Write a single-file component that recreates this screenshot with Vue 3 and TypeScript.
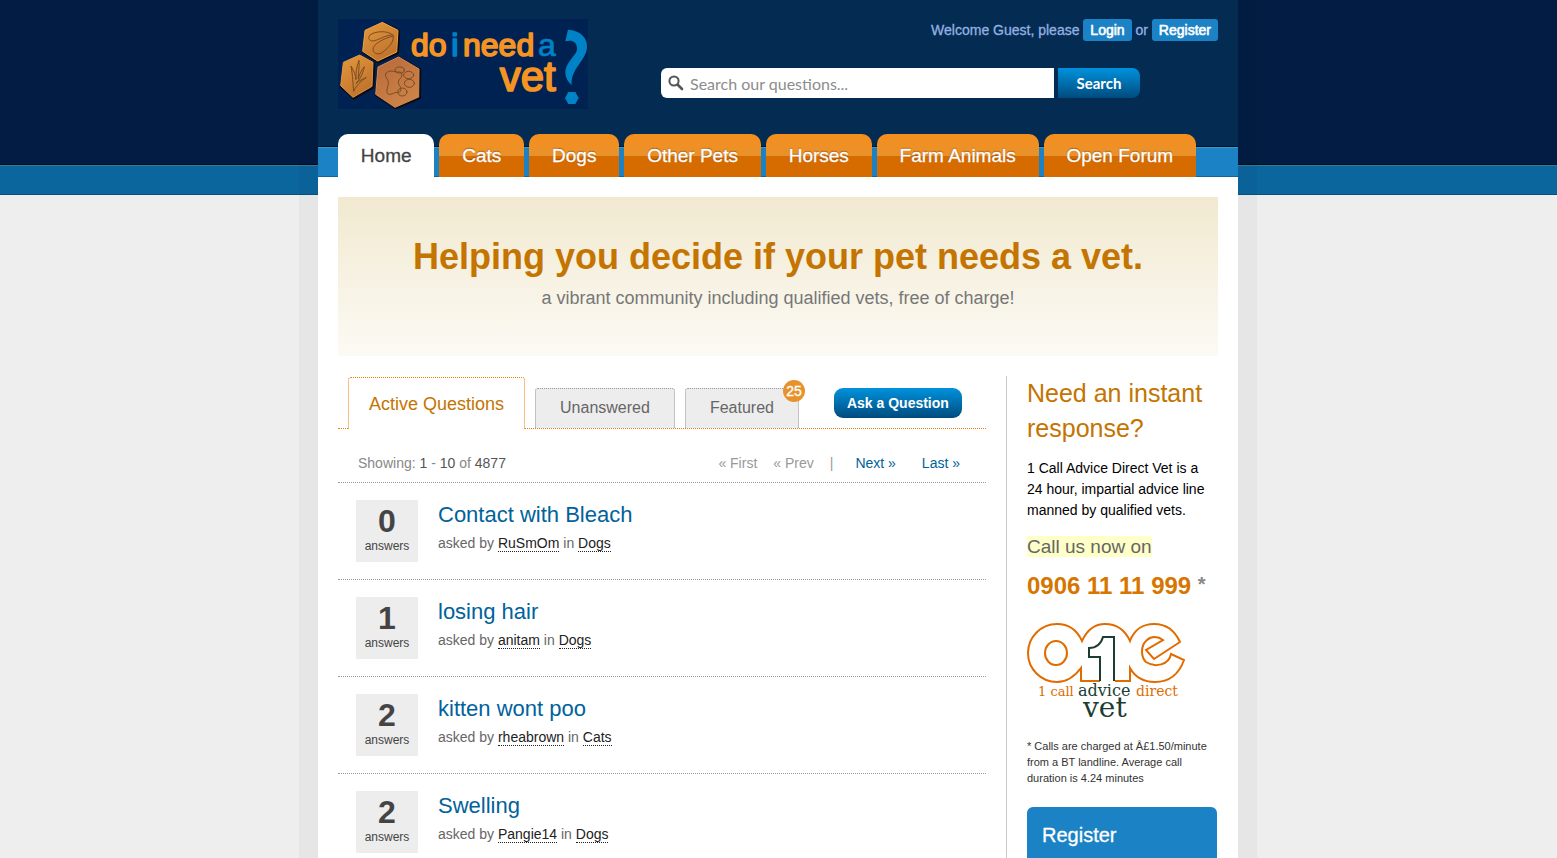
<script setup lang="ts">
interface Question {
  answers: number
  title: string
  user: string
  category: string
}

const sections: string[] = ['Home', 'Cats', 'Dogs', 'Other Pets', 'Horses', 'Farm Animals', 'Open Forum']

const questions: Question[] = [
  { answers: 0, title: 'Contact with Bleach', user: 'RuSmOm', category: 'Dogs' },
  { answers: 1, title: 'losing hair', user: 'anitam', category: 'Dogs' },
  { answers: 2, title: 'kitten wont poo', user: 'rheabrown', category: 'Cats' },
  { answers: 2, title: 'Swelling', user: 'Pangie14', category: 'Dogs' },
]
</script>

<template>
  <div class="page">
    <div class="wrap">
      <header class="header">
        <a class="logo" href="#" aria-label="Do I need a vet?">
          <svg width="250" height="90" viewBox="54 57 750 270" aria-hidden="true">
            <defs>
              <linearGradient id="amber" x1="0" y1="0" x2="0.6" y2="1">
                <stop offset="0" stop-color="#e59a3c" />
                <stop offset="1" stop-color="#c0722c" />
              </linearGradient>
              <linearGradient id="copper" x1="0" y1="0" x2="0.6" y2="1">
                <stop offset="0" stop-color="#b8693a" />
                <stop offset="1" stop-color="#cc8348" />
              </linearGradient>
            </defs>
            <rect x="54" y="57" width="750" height="270" fill="#002253" />
            <g fill="#0c0b12" stroke="#0c0b12" stroke-width="4" stroke-linejoin="round">
              <path d="M190 68 239 92 235 160 175 188 129 158 136 92Z" />
              <path d="M122 166 164 189 161 263 101 297 62 261 70 189Z" />
              <path d="M239 172 302 209 301 295 227 326 167 286 175 203Z" />
            </g>
            <g stroke-width="3" stroke-linejoin="round">
              <path d="M187 67 234 91 230 156 173 183 128 154 135 91Z" fill="url(#amber)" stroke="#e8a450" />
              <path d="M119 165 159 187 156 259 99 292 62 257 70 187Z" fill="url(#amber)" stroke="#dd964a" />
              <path d="M236 171 297 207 296 291 225 322 167 283 174 201Z" fill="url(#copper)" stroke="#d48a55" />
            </g>
            <g fill="none" stroke="#7a4c26" stroke-width="3" stroke-linecap="round" stroke-linejoin="round">
              <path d="M217 104C202 90 163 94 150 105C141 114 149 126 164 122C181 117 192 108 217 104Z" />
              <path d="M220 108C192 115 158 132 159 149C160 163 179 165 188 157C202 145 222 130 220 108Z" />
              <path d="M101 273C98 248 99 231 93 198C103 216 107 225 108 239C107 219 109 204 117 181C119 202 114 221 115 237C118 224 122 214 133 200C128 224 119 239 108 250C119 241 128 238 139 232C122 246 112 252 101 273Z" />
              <path d="M198 220C208 206 224 217 234 216C248 214 248 228 241 235C234 242 233 250 240 259C246 271 241 280 229 277C217 280 207 288 202 279C197 269 207 256 205 244C202 235 192 229 198 220Z" />
              <ellipse cx="239" cy="210" rx="14" ry="9" />
              <ellipse cx="266" cy="225" rx="15" ry="11" />
              <ellipse cx="268" cy="250" rx="15" ry="12" />
              <ellipse cx="247" cy="276" rx="14" ry="12" />
            </g>
            <g class="logo-text" stroke-width="5" stroke-linejoin="round">
              <g fill="#f59423" stroke="#f59423" font-size="96">
                <text x="273" y="168">do</text>
                <text x="429" y="168">need</text>
                <text x="539" y="273" font-size="126">vet</text>
              </g>
              <g fill="#0083c6" stroke="#0083c6" font-size="96" stroke-width="2">
                <text x="394" y="168" stroke-width="5">i</text>
                <text x="654" y="168">a</text>
              </g>
            </g>
            <g fill="#0083c6">
              <path d="M744 89C780 91 803 112 801 143C798 181 751 207 755 255C735 237 730 214 744 191C757 170 773 158 771 144C770 125 756 119 736 124Z" />
              <path d="M745 276H766L776 294L766 312H745L735 294Z" />
            </g>
          </svg>
        </a>
        <div class="header-tools">
          <p class="welcome">
            Welcome Guest, please <a class="chip" href="#">Login</a> or <a class="chip" href="#">Register</a>
          </p>
          <form class="search" role="search" @submit.prevent>
            <label class="search-box">
              <svg width="16" height="16" viewBox="0 0 16 16" role="img" aria-label="Search our questions">
                <circle cx="6" cy="6" r="4.6" fill="none" stroke="#555" stroke-width="2" />
                <path d="M9.5 9.5 14 14" stroke="#555" stroke-width="2.6" stroke-linecap="round" />
              </svg>
              <input type="text" placeholder="Search our questions..." />
            </label>
            <button type="submit">Search</button>
          </form>
        </div>
      </header>

      <nav class="sections">
        <a v-for="(name, i) in sections" :key="name" href="#" :class="{ current: i === 0 }">{{ name }}</a>
      </nav>

      <section class="hero">
        <h1>Helping you decide if your pet needs a vet.</h1>
        <p>a vibrant community including qualified vets, free of charge!</p>
      </section>

      <div class="columns">
        <main class="content">
          <div class="tabs">
            <a class="tab active" href="#">Active Questions</a>
            <a class="tab" href="#">Unanswered</a>
            <a class="tab" href="#">Featured<span class="badge">25</span></a>
            <button class="ask" type="button">Ask a Question</button>
          </div>
          <div class="pager">
            <p>Showing: <b>1</b> - <b>10</b> of <b>4877</b></p>
            <div class="pages">
              <span>« First</span>
              <span>« Prev</span>
              <span>|</span>
              <a class="next" href="#">Next »</a>
              <a class="last" href="#">Last »</a>
            </div>
          </div>
          <article v-for="q in questions" :key="q.title" class="question">
            <div class="count"><strong>{{ q.answers }}</strong><span>answers</span></div>
            <div>
              <h2><a href="#">{{ q.title }}</a></h2>
              <p>asked by <a href="#">{{ q.user }}</a> in <a href="#">{{ q.category }}</a></p>
            </div>
          </article>
        </main>

        <aside class="sidebar">
          <h2>Need an instant response?</h2>
          <p class="pitch">1 Call Advice Direct Vet is a 24 hour, impartial advice line manned by qualified vets.</p>
          <p class="call"><mark>Call us now on</mark></p>
          <p class="phone">0906 11 11 999 <span>*</span></p>
          <svg class="partner" width="160" height="104" viewBox="0 0 160 104" role="img" aria-label="1 call advice direct vet">
            <g fill="none" stroke="#e06c00" stroke-width="2" stroke-linejoin="miter">
              <path d="M73 59H54V46C48 54 40 60 30 60C14 60 1 47 1 31C1 15 14 2 30 2C41 2 50 8 55 19C60 8 68 2 78 2C89 2 98 8 103 19C107 8 116 2 127 2C139 2 148 9 153 20L127 37L119 28L136 18C131 14 124 14 120 18C113 24 114 35 119 40C128 46 142 43 144 32L157 38C152 52 142 60 128 60C117 60 108 55 103 46V59H88" />
              <ellipse cx="29" cy="31" rx="11" ry="12" />
            </g>
            <path d="M73 59V35H62V26C70 26 74 22 76 15H87V59" fill="#fff" stroke="#1c3d33" stroke-width="2" />
            <g class="partner-text">
              <text x="11" y="74" font-size="13" fill="#e06c00">1 call</text>
              <text x="51" y="74" font-size="16" fill="#1c3d33">advice</text>
              <text x="109" y="74" font-size="14" fill="#e06c00">direct</text>
              <text x="56" y="95" font-size="28" fill="#1c3d33">vet</text>
            </g>
          </svg>
          <p class="terms">* Calls are charged at Â£1.50/minute from a BT landline. Average call duration is 4.24 minutes</p>
          <section class="register">
            <h2>Register</h2>
          </section>
        </aside>
      </div>
    </div>
  </div>
</template>

<style>
body {
  margin: 0;
  background: #ededed;
}
</style>

<style scoped>
.page {
  min-height: 100vh;
  padding-right: 1px;
  background: linear-gradient(#031c44 164px, #0a0d14 164px 165px, #2b7ca6 165px 166px, #0b669d 166px 194px, #075180 194px 195px, #eee 195px);
  font-family: "Liberation Sans", Arial, sans-serif;
  font-size: 14px;
  line-height: 21px;
  color: #666;
}

h1,
h2,
p {
  margin: 0;
  font-weight: normal;
}

a {
  color: #00629b;
  text-decoration: none;
}

.wrap {
  max-width: 920px;
  min-height: 100vh;
  margin: 0 auto;
  background: #fff;
  box-shadow: -19px 0 rgba(0, 0, 0, 0.03), 19px 0 rgba(0, 0, 0, 0.03);
}

.header {
  display: flex;
  justify-content: space-between;
  height: 115px;
  padding: 19px 20px 0;
  background: #042b52;
}

.logo svg {
  display: block;
}

.logo-text {
  font-family: "Liberation Sans", Arial, sans-serif;
}

.header-tools {
  width: 557px;
}

.welcome {
  line-height: 22px;
  text-align: right;
  color: #93b1e0;
  -webkit-text-stroke: 0.3px;
}

.chip {
  display: inline-block;
  padding: 0 7px;
  border-radius: 3px;
  background: #1a82c5;
  color: #fff;
  -webkit-text-stroke: 0.6px;
}

.search {
  display: flex;
  gap: 4px;
  margin-top: 27px;
  font-family: Lato, "Open Sans", sans-serif;
  font-size: 16px;
}

.search-box {
  display: flex;
  align-items: center;
  gap: 6px;
  width: 393px;
  height: 30px;
  box-sizing: border-box;
  padding: 0 7px;
  border-radius: 6px 0 0 6px;
  background: #fff;
}

.search input {
  flex: 1;
  padding: 0;
  border: 0;
  outline: 0;
  background: none;
  font: inherit;
  color: #333;
}

.search input::placeholder {
  color: #8c8c8c;
}

.search button {
  width: 82px;
  padding: 0;
  border: 0;
  border-radius: 0 8px 8px 0;
  background: linear-gradient(#0092dd, #004b7e);
  font: inherit;
  font-size: 15px;
  font-weight: bold;
  color: #fff;
}

.sections {
  display: flex;
  gap: 5px;
  padding: 0 42px 0 20px;
  background: linear-gradient(#042b52 12px, #050d18 12px 13px, #3a9bd3 13px 14px, #1a82c5 14px 42px, #0f669e 42px);
}

.sections a {
  flex: 1 1 auto;
  padding: 0 20px;
  border-radius: 10px 10px 0 0;
  background: linear-gradient(#f58f1e, #e9912b 22px, #d66b00 22px);
  font-size: 19px;
  line-height: 43px;
  text-align: center;
  color: #fff;
  text-shadow: 0 -1px 1px rgba(90, 40, 0, 0.6);
  -webkit-text-stroke: 0.3px;
}

.sections .current {
  background: #fff;
  color: #444;
  text-shadow: none;
}

.hero {
  margin: 20px 20px 0;
  padding: 39px 0 47px;
  background: linear-gradient(#f1e9d0, #fcfaf4);
  text-align: center;
}

.hero h1 {
  font-size: 36px;
  font-weight: bold;
  line-height: 42px;
  color: #c47400;
}

.hero p {
  margin-top: 10px;
  font-size: 18px;
  color: #777;
}

.columns {
  display: flex;
  gap: 20px;
  padding: 20px 20px 0;
}

.content {
  flex: 1;
}

.tabs {
  display: flex;
  align-items: flex-end;
  gap: 10px;
  height: 52px;
  padding-left: 10px;
  border-bottom: 1px dotted #e8820c;
}

.tab {
  position: relative;
  padding: 0 24px 2px;
  border: 1px dotted #999;
  border-bottom: 0;
  border-radius: 3px 3px 0 0;
  background: #ededed;
  font-size: 16px;
  line-height: 37px;
  color: #666;
}

.tab.active {
  margin-bottom: -1px;
  padding: 2px 20px 0;
  border-color: #e8820c;
  background: #fff;
  font-size: 18px;
  line-height: 49px;
  color: #c47400;
}

.badge {
  position: absolute;
  top: -9px;
  right: -7px;
  width: 22px;
  border-radius: 11px;
  background: #e8922c;
  font-size: 14px;
  line-height: 22px;
  text-align: center;
  color: #fff;
  -webkit-text-stroke: 0.3px;
}

.ask {
  align-self: flex-start;
  height: 30px;
  margin: 12px 0 0 25px;
  padding: 0 13px;
  border: 0;
  border-radius: 9px;
  background: linear-gradient(#0092dd, #004b7e);
  font: inherit;
  font-weight: bold;
  color: #fff;
}

.pager {
  display: flex;
  justify-content: space-between;
  padding: 24px 26px 8px 20px;
  border-bottom: 1px dotted #999;
  color: #888;
}

.pager b {
  font-weight: normal;
  color: #555;
}

.pages {
  display: flex;
  gap: 16px;
  color: #999;
}

.next {
  margin-left: 6px;
}

.last {
  margin-left: 10px;
}

.question {
  display: flex;
  gap: 20px;
  padding: 17px 18px;
  border-bottom: 1px dotted #999;
}

.count {
  width: 62px;
  height: 62px;
  background: #ededed;
  text-align: center;
  color: #444;
}

.count strong {
  display: block;
  padding-top: 4px;
  font-size: 32px;
  line-height: 34px;
}

.count span {
  display: block;
  font-size: 12px;
  line-height: 16px;
}

.question h2 {
  font-size: 22px;
  line-height: 30px;
}

.question p {
  margin-top: 3px;
}

.question p a {
  border-bottom: 1px dotted #222;
  color: #222;
}

.sidebar {
  width: 190px;
  padding: 0 1px 20px 20px;
  border-left: 1px solid #ccc;
}

.sidebar h2 {
  font-size: 25px;
  line-height: 35px;
  color: #c47400;
}

.pitch {
  margin-top: 12px;
  color: #000;
}

.call {
  margin-top: 15px;
  font-size: 19px;
}

.call mark {
  background: #ffffc8;
  color: #666;
}

.phone {
  margin-top: 14px;
  font-size: 24px;
  font-weight: bold;
  line-height: 30px;
  white-space: nowrap;
  color: #d67600;
}

.phone span {
  font-size: 20px;
  line-height: 20px;
  vertical-align: 3px;
  color: #888;
}

.partner {
  display: block;
  margin-top: 21px;
}

.partner-text {
  font-family: "DejaVu Serif", serif;
}

.terms {
  margin-top: 12px;
  font-size: 11px;
  line-height: 16px;
  color: #333;
}

.register {
  min-height: 200px;
  margin-top: 21px;
  border-radius: 6px;
  background: #1a82c5;
}

.sidebar .register h2 {
  padding: 11px 15px;
  font-size: 20px;
  color: #fff;
  -webkit-text-stroke: 0.3px;
}
</style>
